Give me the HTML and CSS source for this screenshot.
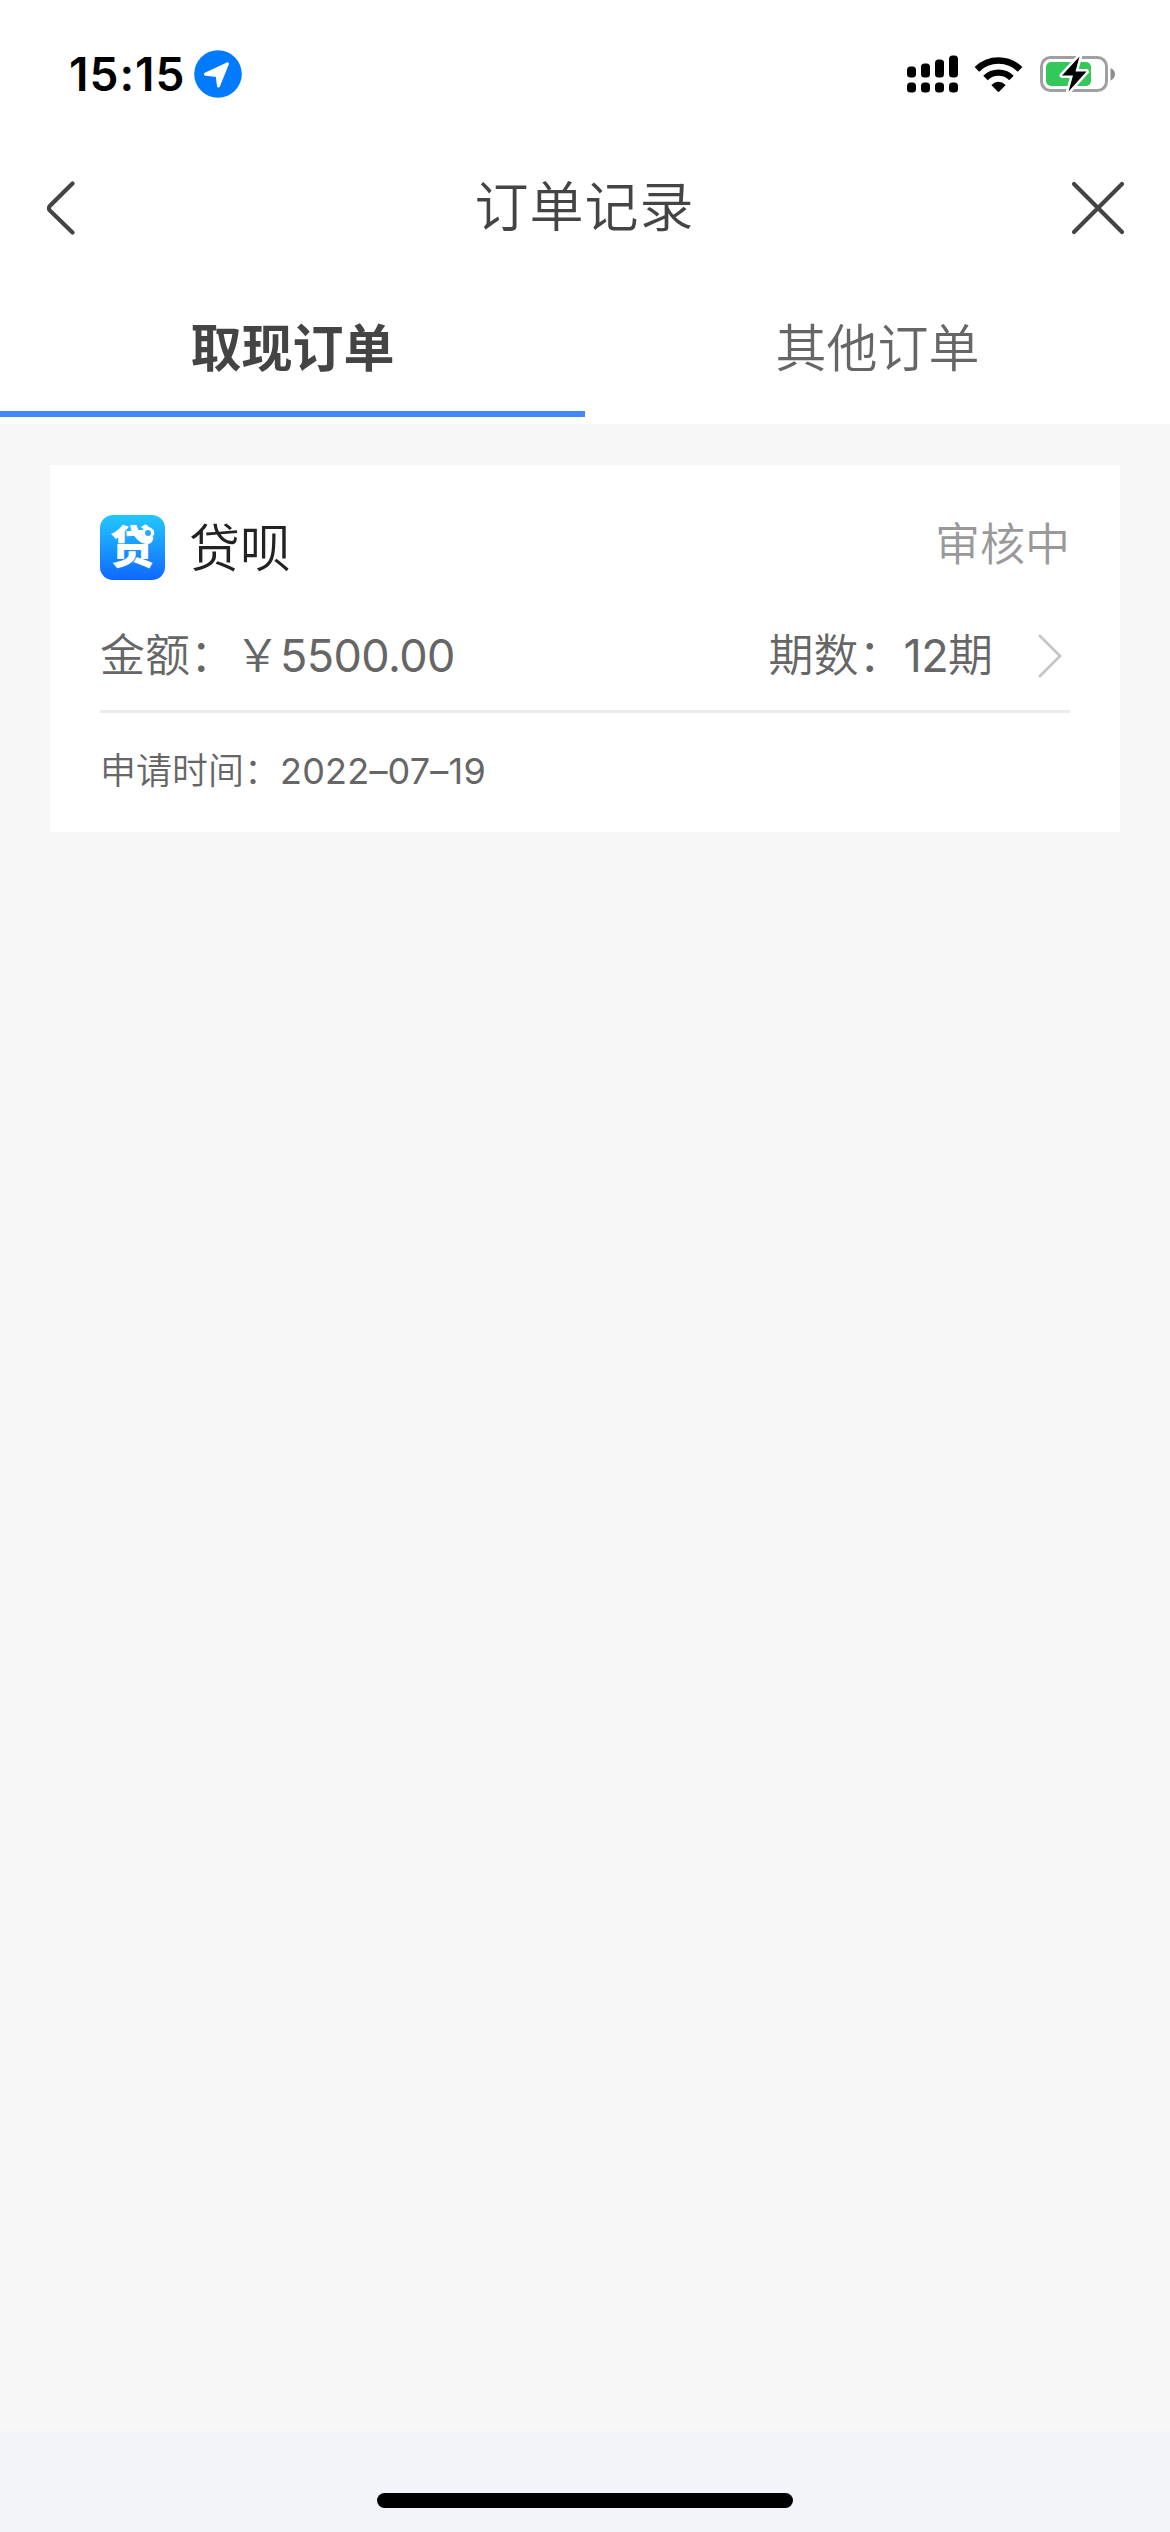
FILE: index.html
```html
<!DOCTYPE html>
<html lang="zh-CN">
    <head>
        <meta charset="utf-8">
        <title>订单记录</title>
        <link rel="stylesheet" href="styles.css">
    </head>
    <body>
        <div class="status_bar">
            <div class="status_left">
                <span class="time">15:15</span>
                <svg class="location" width="48" height="48" viewBox="0 0 48 48">
                    <circle cx="24" cy="24" r="23.8" fill="#007aff"/>
                    <path d="M11.5 24.2 L33.5 13.8 L24.5 36 L23.2 25.5 Z" fill="#fff" stroke="#fff" stroke-width="3" stroke-linejoin="round"/>
                </svg>
            </div>
            <div class="status_right">
                <svg width="51" height="38" viewBox="0 0 51 38">
                    <rect x="0" y="11.5" width="9" height="11" rx="3.5"/>
                    <rect x="14" y="8.5" width="9" height="14" rx="3.5"/>
                    <rect x="28" y="4.5" width="9" height="18" rx="3.5"/>
                    <rect x="42" y="0.5" width="9" height="22" rx="3.5"/>
                    <rect x="0" y="27.5" width="9" height="10" rx="3.5"/>
                    <rect x="14" y="27.5" width="9" height="10" rx="3.5"/>
                    <rect x="28" y="27.5" width="9" height="10" rx="3.5"/>
                    <rect x="42" y="27.5" width="9" height="10" rx="3.5"/>
                </svg>
                <svg class="wifi" width="49" height="37" viewBox="0 0 49 37">
                    <path d="M2.9 13.3 A31 31 0 0 1 46.1 13.3" fill="none" stroke="#000" stroke-width="6.6"/>
                    <path d="M11.5 22 A18.5 18.5 0 0 1 37.5 22" fill="none" stroke="#000" stroke-width="6.4"/>
                    <path d="M17.3 29 Q24.5 22.6 31.7 29 L25.3 35.6 Q24.5 36.4 23.7 35.6 Z"/>
                </svg>
                <svg class="battery" width="75" height="40" viewBox="0 0 75 40">
                    <rect x="1.5" y="3.5" width="65" height="33" rx="9" fill="none" stroke="#a0a0a0" stroke-width="3"/>
                    <path d="M70.5 14 Q75 16 75 20.3 Q75 24.6 70.5 26.5 Z" fill="#8e8e8e"/>
                    <rect x="6" y="8" width="45" height="24" rx="5" fill="#34c759"/>
                    <path d="M39.5 2.5 L22 21.5 H33 L28.5 37.5 L46.5 17.5 H35.5 Z" fill="#000" stroke="#fff" stroke-width="5" stroke-linejoin="round" paint-order="stroke"/>
                </svg>
            </div>
        </div>
        <div class="nav_bar">
            <svg class="back" width="28" height="56" viewBox="0 0 28 56">
                <path d="M25.5 3.5 L2.8 26 Q1 28.2 2.8 30.4 L25.5 52.5" fill="none" stroke="#444" stroke-width="4.2" stroke-linecap="round"/>
            </svg>
            <h1>订单记录</h1>
            <svg class="close" width="54" height="54" viewBox="0 0 54 54">
                <path d="M3 3 L51 51 M51 3 L3 51" fill="none" stroke="#444" stroke-width="4.2" stroke-linecap="round"/>
            </svg>
        </div>
        <div class="tabs">
            <div class="tab active">取现订单</div>
            <div class="tab">其他订单</div>
        </div>
        <div class="content">
            <div class="order">
                <div class="order_head">
                    <div class="logo">
                        <span>贷</span>
                        <i class="ring"></i>
                    </div>
                    <span class="name">贷呗</span>
                    <span class="state">审核中</span>
                </div>
                <div class="order_info">
                    <span>金额：￥<span class="num">5500.00</span></span>
                    <span class="period">期数：<span class="num">12</span>期</span>
                    <svg class="arrow" width="24" height="44" viewBox="0 0 24 44">
                        <path d="M2 2 L22 22 L2 42" fill="none" stroke="#c8c8c8" stroke-width="3" stroke-linecap="round" stroke-linejoin="round"/>
                    </svg>
                </div>
                <div class="order_time">申请时间：<span class="date">2022–07–19</span></div>
            </div>
        </div>
        <div class="home_bar">
            <div class="home_line"></div>
        </div>
    </body>
</html>
```

FILE: styles.css
```css
* {
    box-sizing: border-box;
}
body {
    margin: 0;
    height: 2532px;
    display: flex;
    flex-direction: column;
    background: #f7f7f7;
    color: #666;
    font-family: "Inter", "Noto Sans CJK SC", sans-serif;
}
svg {
    display: block;
    flex: none;
}

/* status bar */
.status_bar {
    height: 148px;
    padding: 0 55px 0 69px;
    display: flex;
    justify-content: space-between;
    align-items: center;
    background: #fff;
}
.status_left, .status_right {
    display: flex;
    align-items: center;
}
.time {
    width: 125px;
    font-size: 46px;
    font-weight: 600;
    letter-spacing: 1px;
    line-height: 56px;
    color: #000;
}
.wifi {
    margin: 0 17px 0 16px;
}

/* title */
.nav_bar {
    height: 120px;
    padding: 0 45px 0 47px;
    display: flex;
    justify-content: space-between;
    align-items: center;
    background: #fff;
}
.back {
    margin-right: 23px;
}
h1 {
    margin: 0;
    font-size: 54px;
    font-weight: 350;
    letter-spacing: 1px;
    line-height: 80px;
    color: #444;
}

/* tabs */
.tabs {
    height: 156px;
    padding-bottom: 7px;
    display: flex;
    background: #fff;
}
.tab {
    flex: 1;
    padding-top: 43px;
    font-size: 51px;
    font-weight: 350;
    line-height: 76px;
    text-align: center;
}
.tab.active {
    border-bottom: 6px solid #4586fa;
    font-weight: 600;
    color: #444;
}

/* orders */
.content {
    flex: 1;
    padding: 41px 50px;
    font-weight: 350;
}
.order {
    height: 367px;
    padding: 50px 50px 0;
    background: #fff;
}
.order_head {
    height: 65px;
    display: flex;
    align-items: center;
}
.logo {
    position: relative;
    width: 65px;
    height: 65px;
    border-radius: 13px;
    background: linear-gradient(#23c8ff, #0f68ff);
    color: #fff;
    font-size: 45px;
    font-weight: 900;
    line-height: 66px;
    text-align: center;
}
.ring {
    position: absolute;
    top: 12px;
    right: 11px;
    width: 12px;
    height: 12px;
    border: 3px solid #fff;
    border-radius: 50%;
    background: #22aeff;
}
.name {
    margin-left: 24px;
    padding-top: 2px;
    font-size: 51px;
    line-height: 65px;
    color: #222;
}
.state {
    margin-left: auto;
    padding-bottom: 5px;
    font-size: 45px;
    line-height: 60px;
    color: #999;
}
.order_info {
    height: 133px;
    padding: 22px 8px 0 0;
    display: flex;
    align-items: center;
    border-bottom: 3px solid #ebebeb;
    font-size: 45px;
    line-height: 64px;
}
.num {
    font-weight: 400;
    letter-spacing: -0.6px;
}
.period {
    margin-left: auto;
}
.arrow {
    margin-left: 45px;
}
.order_time {
    padding-top: 31px;
    font-size: 36px;
    line-height: 54px;
}
.date {
    font-weight: 400;
    letter-spacing: 0.2px;
}

/* home indicator */
.home_bar {
    height: 101px;
    padding-top: 62px;
    background: #f3f4f9;
}
.home_line {
    width: 416px;
    height: 15px;
    margin: 0 auto;
    border-radius: 8px;
    background: #000;
}
```
